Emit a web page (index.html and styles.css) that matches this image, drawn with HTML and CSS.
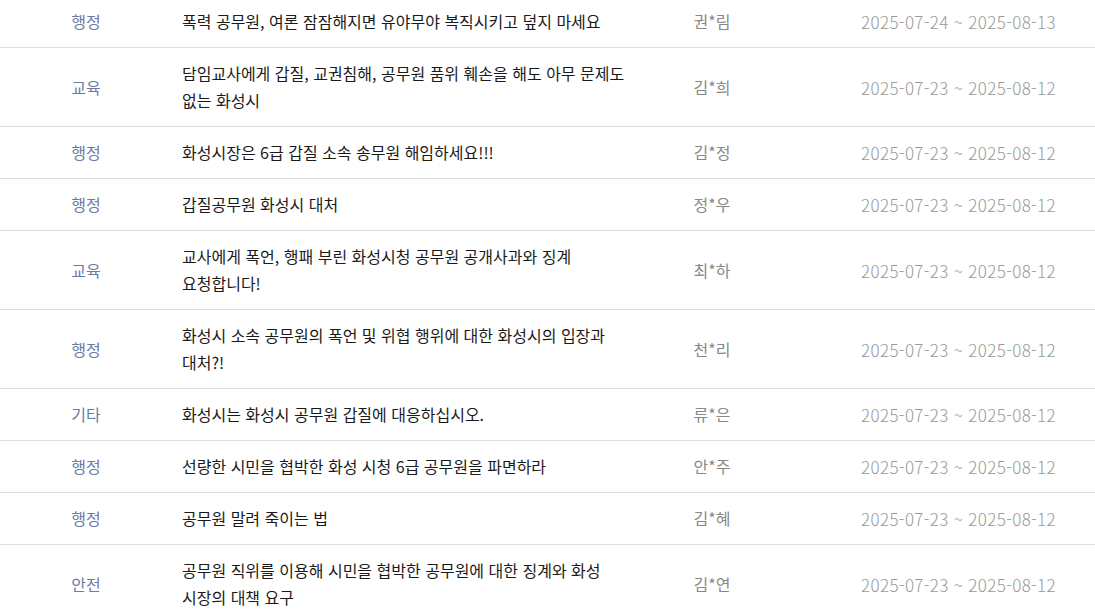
FILE: index.html
```html
<!DOCTYPE html>
<html lang="ko">
<head>
  <meta charset="UTF-8">
  <title>청원 목록</title>
  <link rel="stylesheet" href="styles.css">
</head>
<body>
  <ul class="petition-list">
    <li class="row">
      <span class="cat">행정</span>
      <span class="title">폭력 공무원, 여론 잠잠해지면 유야무야 복직시키고 덮지 마세요</span>
      <span class="author">권*림</span>
      <span class="period">2025-07-24 ~ 2025-08-13</span>
    </li>
    <li class="row">
      <span class="cat">교육</span>
      <span class="title">담임교사에게 갑질, 교권침해, 공무원 품위 훼손을 해도 아무 문제도 없는 화성시</span>
      <span class="author">김*희</span>
      <span class="period">2025-07-23 ~ 2025-08-12</span>
    </li>
    <li class="row">
      <span class="cat">행정</span>
      <span class="title">화성시장은 6급 갑질 소속 송무원 해임하세요!!!</span>
      <span class="author">김*정</span>
      <span class="period">2025-07-23 ~ 2025-08-12</span>
    </li>
    <li class="row">
      <span class="cat">행정</span>
      <span class="title">갑질공무원 화성시 대처</span>
      <span class="author">정*우</span>
      <span class="period">2025-07-23 ~ 2025-08-12</span>
    </li>
    <li class="row">
      <span class="cat">교육</span>
      <span class="title">교사에게 폭언, 행패 부린 화성시청 공무원 공개사과와 징계 요청합니다!</span>
      <span class="author">최*하</span>
      <span class="period">2025-07-23 ~ 2025-08-12</span>
    </li>
    <li class="row">
      <span class="cat">행정</span>
      <span class="title">화성시 소속 공무원의 폭언 및 위협 행위에 대한 화성시의 입장과 대처?!</span>
      <span class="author">천*리</span>
      <span class="period">2025-07-23 ~ 2025-08-12</span>
    </li>
    <li class="row">
      <span class="cat">기타</span>
      <span class="title">화성시는 화성시 공무원 갑질에 대응하십시오.</span>
      <span class="author">류*은</span>
      <span class="period">2025-07-23 ~ 2025-08-12</span>
    </li>
    <li class="row">
      <span class="cat">행정</span>
      <span class="title">선량한 시민을 협박한 화성 시청 6급 공무원을 파면하라</span>
      <span class="author">안*주</span>
      <span class="period">2025-07-23 ~ 2025-08-12</span>
    </li>
    <li class="row">
      <span class="cat">행정</span>
      <span class="title">공무원 말려 죽이는 법</span>
      <span class="author">김*혜</span>
      <span class="period">2025-07-23 ~ 2025-08-12</span>
    </li>
    <li class="row">
      <span class="cat">안전</span>
      <span class="title">공무원 직위를 이용해 시민을 협박한 공무원에 대한 징계와 화성 시장의 대책 요구</span>
      <span class="author">김*연</span>
      <span class="period">2025-07-23 ~ 2025-08-12</span>
    </li>
  </ul>
</body>
</html>
```

FILE: styles.css
```css
body { margin: 0; background: #fff; font-family: "Noto Sans CJK KR", "Noto Sans", sans-serif; font-size: 16px; color: #222; }
.petition-list { list-style: none; margin: -4px 0 0; padding: 0; }
.row { display: grid; grid-template-columns: 172px 468px 144px 1fr; align-items: center; padding: 12px 0; border-bottom: 1px solid #ddd; line-height: 27px; }
.cat { text-align: center; color: #6b7ba6; }
.title { padding-left: 10px; padding-right: 2px; color: #1a1a1a; word-break: keep-all; }
.author { text-align: center; color: #888; }
.period { text-align: right; padding-right: 39px; color: #999; font-size: 17px; font-weight: 300; letter-spacing: 0.35px; }
```
